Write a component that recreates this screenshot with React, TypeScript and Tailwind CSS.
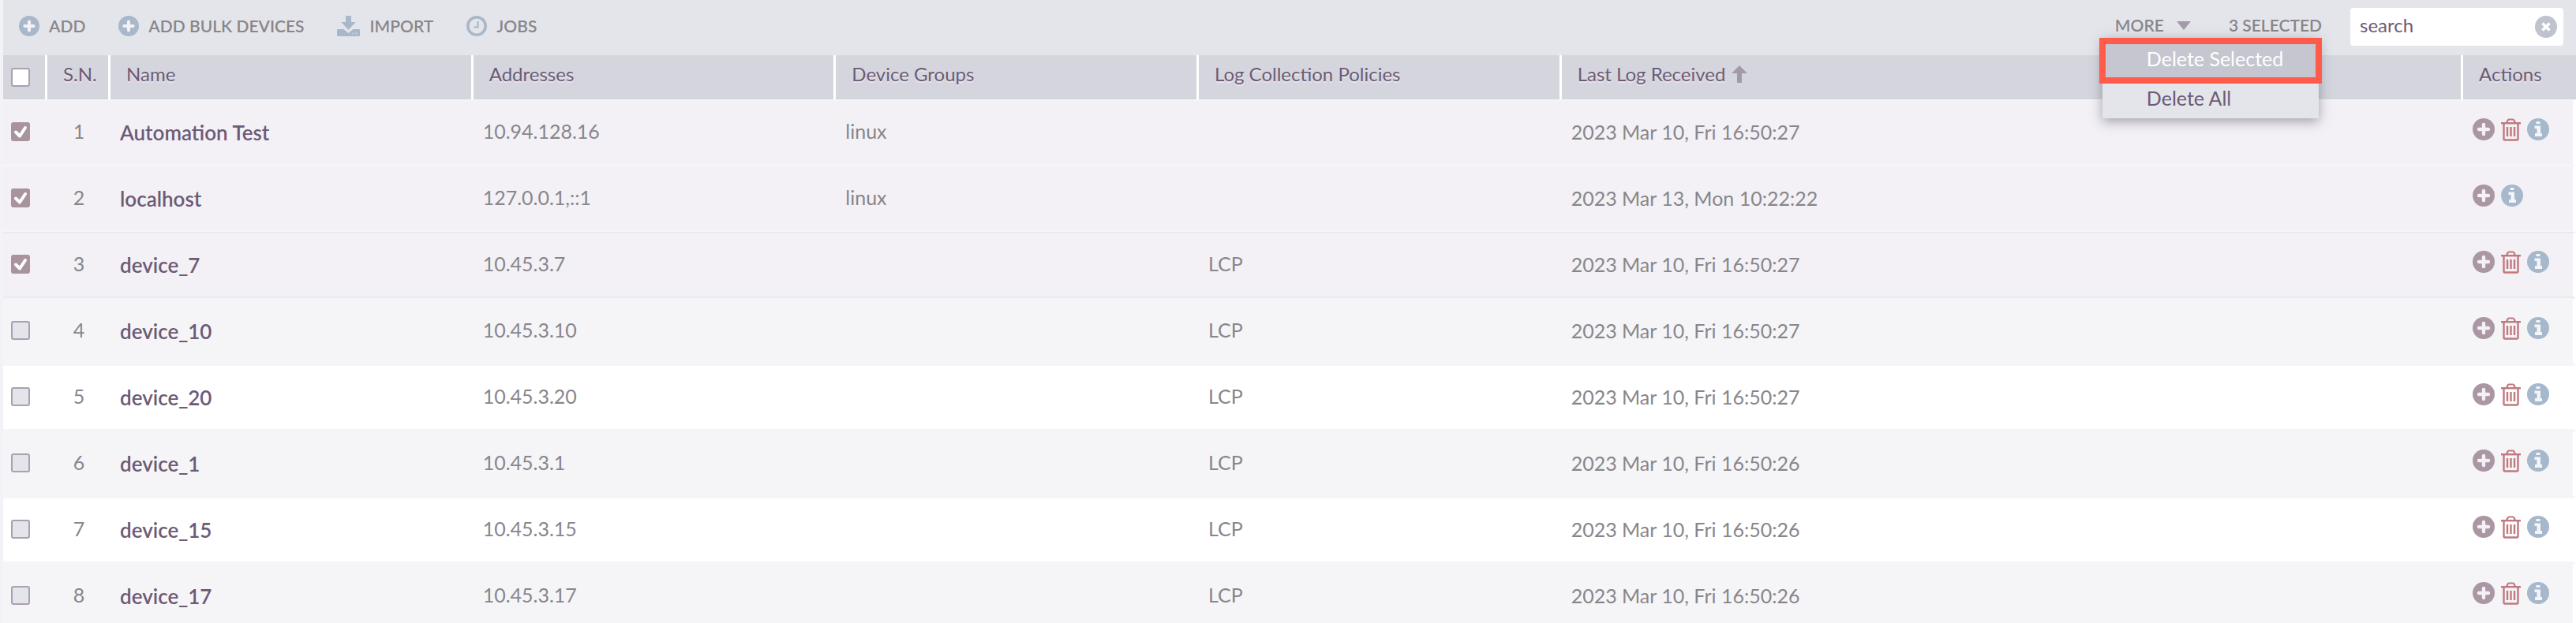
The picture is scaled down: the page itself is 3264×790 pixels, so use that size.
import { useState } from "react";

type Device = {
  name: string;
  addresses: string;
  groups?: string;
  policies?: string;
  lastLog: string;
  locked?: boolean;
};

const devices: Device[] = [
  { name: "Automation Test", addresses: "10.94.128.16", groups: "linux", lastLog: "2023 Mar 10, Fri 16:50:27" },
  { name: "localhost", addresses: "127.0.0.1,::1", groups: "linux", lastLog: "2023 Mar 13, Mon 10:22:22", locked: true },
  { name: "device_7", addresses: "10.45.3.7", policies: "LCP", lastLog: "2023 Mar 10, Fri 16:50:27" },
  { name: "device_10", addresses: "10.45.3.10", policies: "LCP", lastLog: "2023 Mar 10, Fri 16:50:27" },
  { name: "device_20", addresses: "10.45.3.20", policies: "LCP", lastLog: "2023 Mar 10, Fri 16:50:27" },
  { name: "device_1", addresses: "10.45.3.1", policies: "LCP", lastLog: "2023 Mar 10, Fri 16:50:26" },
  { name: "device_15", addresses: "10.45.3.15", policies: "LCP", lastLog: "2023 Mar 10, Fri 16:50:26" },
  { name: "device_17", addresses: "10.45.3.17", policies: "LCP", lastLog: "2023 Mar 10, Fri 16:50:26" },
];

function PlusIcon({ className }: { className: string }) {
  return (
    <svg viewBox="0 0 28 28" className={className} aria-hidden="true">
      <circle cx="14" cy="14" r="14" fill="currentColor" />
      <path d="M14 8v12M8 14h12" stroke="#f3f1f6" strokeWidth="4.4" strokeLinecap="round" />
    </svg>
  );
}

function InfoIcon() {
  return (
    <svg viewBox="0 0 28 28" className="size-7 text-[#a5b8cc]" aria-hidden="true">
      <circle cx="14" cy="14" r="14" fill="currentColor" />
      <path d="M11.5 4h5v3h-5zM9.500 9.500h7.500v9.500h2v4h-9v-4h2.500v-6h-3z" fill="#f5f5f8" />
    </svg>
  );
}

function TrashIcon() {
  return (
    <svg viewBox="0 0 25 29" className="h-[29px] w-[25px]" fill="none" stroke="#c0797f" aria-hidden="true">
      <path d="M0 6.2h25" strokeWidth="2.4" />
      <path d="M7 6l1.500-3.500q.5-1 1.500-1h5q1 0 1.500 1L18 6" strokeWidth="2.2" />
      <path d="M3.500 7v19q0 1.500 1.500 1.500h15q1.500 0 1.500-1.500V7" strokeWidth="2.4" />
      <path d="M8 11v12M12.500 11v12M17 11v12" strokeWidth="2.4" />
    </svg>
  );
}

function ImportIcon() {
  return (
    <svg viewBox="0 0 29 26" className="h-[26px] w-[29px]" fill="#a8b7ca" aria-hidden="true">
      <path d="M11 0h7v8h5.500l-9 10-9-10H11z" />
      <path d="M1 17h7.500l6 5 6-5H28q1 0 1 1v7q0 1-1 1H1q-1 0-1-1v-7q0-1 1-1z" />
      <path d="M19.500 21.500h2v2h-2zM23.500 21.500h2v2h-2z" fill="#ccd3de" />
    </svg>
  );
}

function ClockIcon() {
  return (
    <svg viewBox="0 0 26 26" className="size-[26px]" fill="none" stroke="#a8b7ca" aria-hidden="true">
      <circle cx="13" cy="13" r="11.2" strokeWidth="3.6" />
      <path d="M14.500 7v7.500H9" strokeWidth="2.2" />
    </svg>
  );
}

function SortArrow() {
  return (
    <svg viewBox="0 0 20 22" className="h-[22px] w-5" fill="#a39aa9" aria-hidden="true">
      <path d="M10 0l10 10h-7v12H7V10H0z" />
    </svg>
  );
}

function Check({ label, checked, header, onChange }: { label: string; checked: boolean; header?: boolean; onChange: () => void }) {
  return (
    <span className="relative block size-6">
      <input
        type="checkbox"
        aria-label={label}
        checked={checked}
        onChange={onChange}
        className={`block size-6 appearance-none rounded-[3px] border-2 border-[#aaa0b0] checked:border-[#a8939f] checked:bg-[#a8939f] ${
          header ? "bg-white" : "bg-[#e4e5ea]"
        }`}
      />
      {checked && (
        <svg viewBox="0 0 24 24" className="pointer-events-none absolute inset-0" aria-hidden="true">
          <path d="M6 12.500l5 5L18 7" fill="none" stroke="#fff" strokeWidth="4" strokeLinecap="round" strokeLinejoin="round" />
        </svg>
      )}
    </span>
  );
}

const th = "border-r-[3px] border-white px-5 pt-2 align-top text-left font-normal [text-shadow:0_2px_0_#e8e6ec]";

export default function App() {
  const [selected, setSelected] = useState([0, 1, 2]);
  const [search, setSearch] = useState("search");

  const lastSelected = Math.max(...selected);

  const toggle = (i: number) =>
    setSelected((prev) => (prev.includes(i) ? prev.filter((n) => n !== i) : [...prev, i]));

  const toggleAll = () =>
    setSelected((prev) => (prev.length === devices.length ? [] : devices.map((_, i) => i)));

  const rowColor = (i: number) => {
    if (selected.includes(i)) {
      return i === lastSelected ? "bg-[#f3f1f6] [&>td]:border-[#e9e9f0]" : "bg-[#f3f1f6] [&>td]:border-[#f5f4f8]";
    }
    return i % 2 ? "bg-[#f5f5f8] [&>td]:border-[#f5f5f8]" : "bg-white [&>td]:border-[#f5f5f8]";
  };

  return (
    <main className="h-screen overflow-hidden border-l-4 border-[#f3f3f7] bg-white font-[Lato,sans-serif] text-[#88868b]">
      <header className="flex h-[70px] items-center bg-[#e4e5ea] pr-4 pb-0.5 text-[21px] font-semibold">
        <nav className="flex items-center gap-[42px] pb-0.5 pl-5">
          <button type="button" className="flex items-center gap-3">
            <PlusIcon className="size-[26px] text-[#a8b7ca]" />
            ADD
          </button>
          <button type="button" className="flex items-center gap-3">
            <PlusIcon className="size-[26px] text-[#a8b7ca]" />
            ADD BULK DEVICES
          </button>
          <button type="button" className="flex items-center gap-3">
            <ImportIcon />
            IMPORT
          </button>
          <button type="button" className="flex items-center gap-3">
            <ClockIcon />
            JOBS
          </button>
        </nav>

        <div className="ml-auto flex items-center">
          <div className="relative mr-12 pb-1">
            <button type="button" aria-expanded="true" className="flex items-center gap-4">
              MORE
              <svg viewBox="0 0 18 11" className="h-[11px] w-[18px]" fill="#a39aab" aria-hidden="true">
                <path d="M0 0h18l-9 11z" />
              </svg>
            </button>
            <ul className="absolute top-full -left-4 -mt-1 w-[274px] bg-[#e4e5ea] text-[25px] font-normal text-[#6d5a76] shadow-[0_4px_14px_rgba(80,75,100,0.5)]">
              <li className="-mx-1 border-8 border-[#ff5b4b] bg-[#c5c6cf] text-white">
                <button type="button" className="block h-[42px] w-full pb-2 pl-13 text-left">
                  Delete Selected
                </button>
              </li>
              <li>
                <button type="button" className="block h-11 w-full pb-4 pl-14 text-left">
                  Delete All
                </button>
              </li>
            </ul>
          </div>
          <span className="mr-9 pb-1">{selected.length} SELECTED</span>
          <div className="flex h-12 w-[270px] items-center rounded bg-white pr-2 pl-3">
            <input
              type="text"
              aria-label="Search devices"
              value={search}
              onChange={(e) => setSearch(e.target.value)}
              className="min-w-0 flex-1 pb-1 text-[24px] font-normal text-[#6d5a76] outline-none"
            />
            <button type="button" aria-label="Clear search" onClick={() => setSearch("")}>
              <svg viewBox="0 0 28 28" className="size-7" aria-hidden="true">
                <circle cx="14" cy="14" r="14" fill="#bfc3cd" />
                <path d="M9.500 9.500l9 9M18.500 9.500l-9 9" stroke="#fff" strokeWidth="3.6" />
              </svg>
            </button>
          </div>
        </div>
      </header>

      <table className="w-full table-fixed border-separate border-spacing-0">
        <colgroup>
          <col className="w-14" />
          <col className="w-20" />
          <col className="w-[14.1%]" />
          <col className="w-[14.1%]" />
          <col className="w-[14.1%]" />
          <col className="w-[14.1%]" />
          <col />
          <col className="w-[143px]" />
        </colgroup>
        <thead>
          <tr className="h-14 bg-[#d4d5dd] text-[24px] leading-8 text-[#6d5a76]">
            <th className="border-r-[3px] border-white px-[10px]">
              <Check label="Select all devices" header checked={selected.length === devices.length} onChange={toggleAll} />
            </th>
            <th className={th}>S.N.</th>
            <th className={th}>Name</th>
            <th className={th}>Addresses</th>
            <th className={th}>Device Groups</th>
            <th className={th}>Log Collection Policies</th>
            <th className={th}>
              <span className="flex items-center gap-2">
                Last Log Received
                <SortArrow />
              </span>
            </th>
            <th className="px-5 pt-2 text-left align-top font-normal [text-shadow:0_2px_0_#e8e6ec]">Actions</th>
          </tr>
        </thead>
        <tbody>
          {devices.map((device, i) => (
            <tr
              key={device.name}
              className={`h-[84px] text-[25px] [&>td]:border-y-2 [&>td:last-child]:border-r-4 [&>td:last-child]:border-r-white ${rowColor(i)}`}
            >
              <td className="px-[10px] pb-0.5">
                <Check label={`Select ${device.name}`} checked={selected.includes(i)} onChange={() => toggle(i)} />
              </td>
              <td className="pb-0.5 text-center">{i + 1}</td>
              <td className="px-3 text-[26px] font-semibold text-[#6d5a76]">{device.name}</td>
              <td className="px-3 pb-0.5">{device.addresses}</td>
              <td className="px-3 pb-0.5">{device.groups}</td>
              <td className="px-3 pb-0.5">{device.policies}</td>
              <td className="px-3">{device.lastLog}</td>
              <td className="px-3 pb-2">
                <div className="flex items-center gap-2">
                  <button type="button" aria-label={`Add to ${device.name}`}>
                    <PlusIcon className="size-7 text-[#ab97a3]" />
                  </button>
                  {!device.locked && (
                    <button type="button" aria-label={`Delete ${device.name}`}>
                      <TrashIcon />
                    </button>
                  )}
                  <button type="button" aria-label={`About ${device.name}`}>
                    <InfoIcon />
                  </button>
                </div>
              </td>
            </tr>
          ))}
        </tbody>
      </table>
    </main>
  );
}
